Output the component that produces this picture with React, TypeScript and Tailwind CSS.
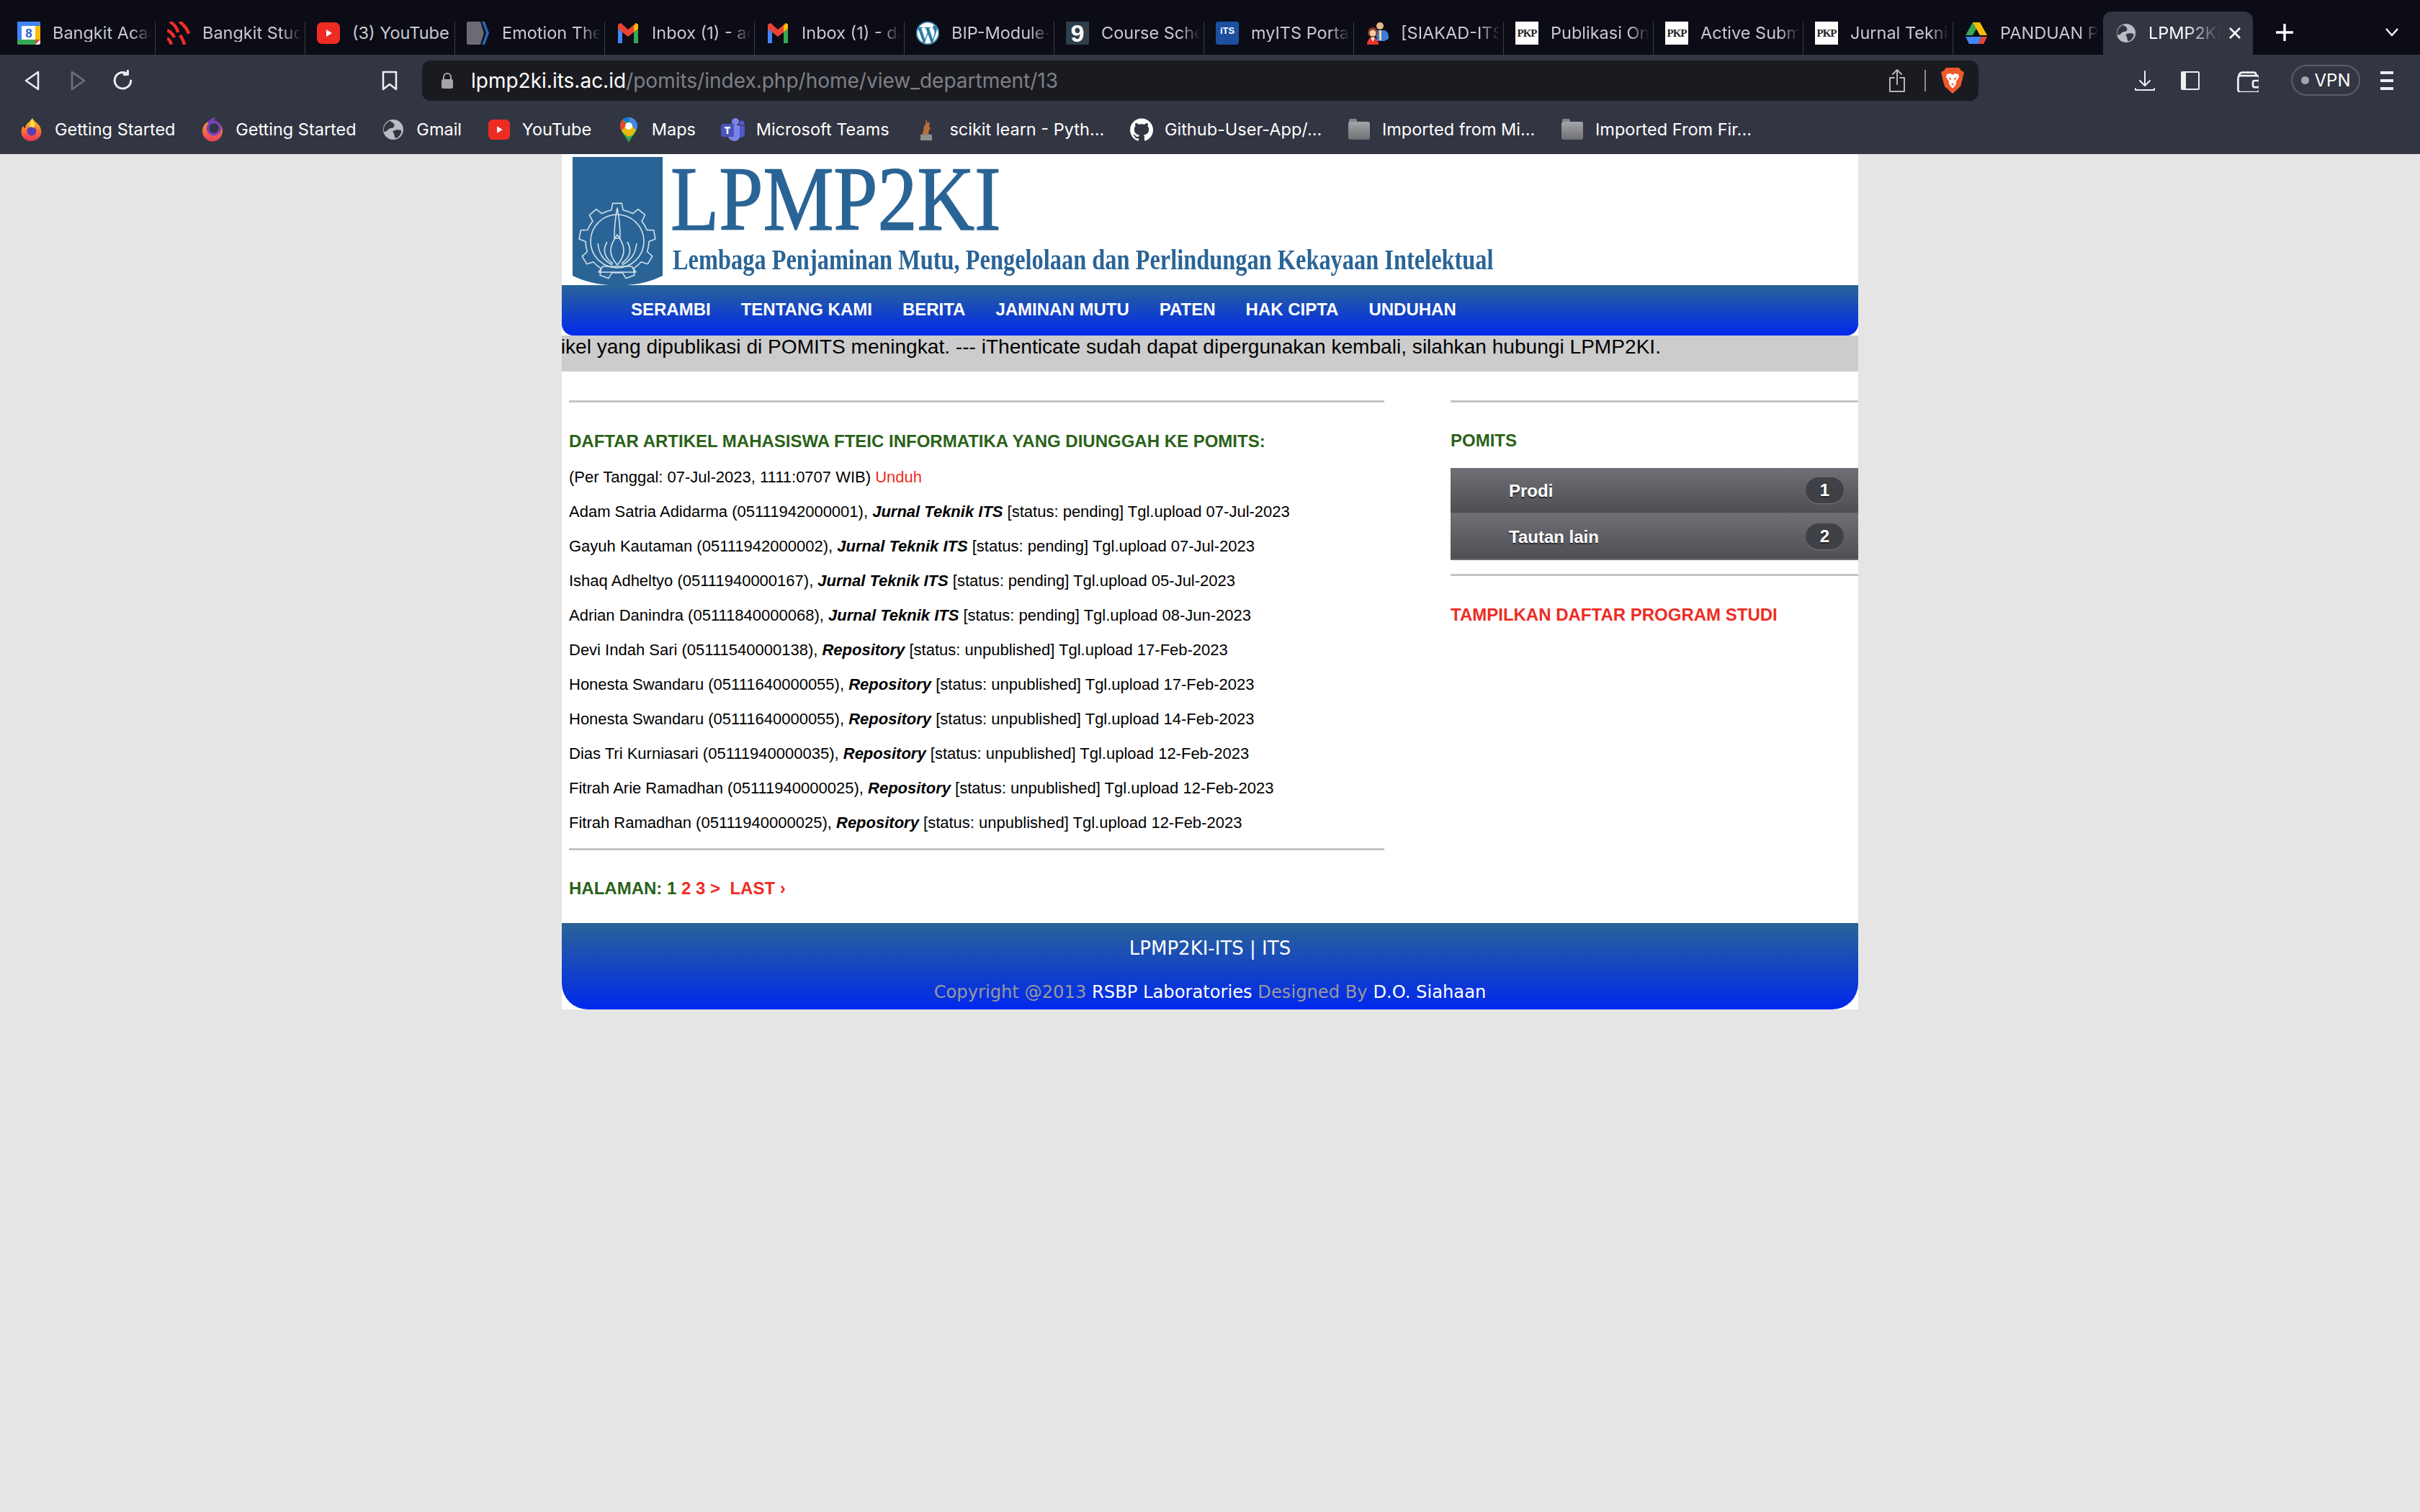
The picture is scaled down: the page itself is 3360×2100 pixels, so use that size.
import React from "react";
import { SiGithub, SiWordpress } from "react-icons/si";

const chromeFont = "font-['Inter','Liberation_Sans',sans-serif]";

function Yt({ s = 32 }: { s?: number }) {
  return (
    <svg width={s} height={s} viewBox="0 0 32 32" className="shrink-0">
      <rect x="0" y="1" width="32" height="30" rx="7" fill="#ee2c24" />
      <path d="M13 11l8 5-8 5z" fill="#fff" />
    </svg>
  );
}
function Globe({ s = 30, tone = "#b9bcc2", dark = "#323542" }: { s?: number; tone?: string; dark?: string }) {
  return (
    <svg width={s} height={s} viewBox="0 0 30 30" className="shrink-0">
      <circle cx="15" cy="15" r="14" fill={tone} />
      <path d="M10 3c5 2 8 5 6 8-2 3-6 1-8 4-2 2-3 3-6 3-1-7 2-12 8-15zM15 17c3-2 8-2 11-1 1 3-2 9-7 11-3-1-2-4-3-6-1-2-2-3-1-4z" fill={dark} />
    </svg>
  );
}
function Gmail() {
  return (
    <svg width="30" height="32" viewBox="0 0 30 32" className="shrink-0">
      <path d="M1 6v24h6V14z" fill="#4285f4" />
      <path d="M23 14v16h6V6z" fill="#34a853" />
      <path d="M1 4v6l14 11 14-11V4l-3-2-11 9L5 2z" fill="#ea4335" />
      <path d="M23 6l3-4 3 2v6l-6 4z" fill="#fbbc04" />
    </svg>
  );
}
function Pkp() {
  return (
    <div className="w-[32px] h-[32px] bg-white shrink-0 flex items-center justify-center overflow-hidden">
      <span className="font-['Liberation_Serif',serif] font-bold text-[15px] text-[#222] tracking-[-1px]">PKP</span>
    </div>
  );
}
function Cal() {
  return (
    <svg width="32" height="32" viewBox="0 0 32 32" className="shrink-0">
      <rect width="32" height="32" rx="3" fill="#fff" />
      <path d="M0 3a3 3 0 013-3h26a3 3 0 013 3v3H0z" fill="#4285f4" />
      <path d="M0 0h6v25H0z" fill="#4285f4" />
      <path d="M0 25h25v7H3a3 3 0 01-3-3z" fill="#34a853" />
      <path d="M25 6h7v19h-7z" fill="#fbbc04" />
      <path d="M25 25h7l-7 7z" fill="#ea4335" />
      <text x="16" y="22" textAnchor="middle" fontSize="17" fontWeight="700" fill="#2a5bd7" fontFamily="Liberation Sans">8</text>
    </svg>
  );
}
function Bangkit() {
  return (
    <svg width="32" height="32" viewBox="0 0 32 32" className="shrink-0" fill="none" stroke="#ee2c24" strokeWidth="4.5">
      <path d="M4 0c6 4 10 9 11 15" />
      <path d="M17 0c6 4 11 10 13 17" />
      <path d="M0 12c5 2 8 5 10 10" />
      <path d="M18 19c3 4 5 8 6 13" />
      <path d="M0 23c3 2 5 5 6 9" />
    </svg>
  );
}
function Emotion() {
  return (
    <svg width="32" height="32" viewBox="0 0 32 32" className="shrink-0">
      <path d="M2 0h17l5 16-5 16H2a2 2 0 01-2-2V2a2 2 0 012-2z" fill="#6a6c71" />
      <path d="M21 0h4l6 16-6 16h-4l6-16z" fill="#2a66b8" />
    </svg>
  );
}
function Wp() {
  return (
    <div className="w-[32px] h-[32px] rounded-full bg-white shrink-0 flex items-center justify-center">
      <SiWordpress size={32} color="#2a7ba8" />
    </div>
  );
}
function Nine() {
  return (
    <div className="w-[32px] h-[32px] bg-[#2e3e4b] shrink-0 flex items-center justify-center overflow-hidden">
      <span className="font-['Liberation_Sans',sans-serif] font-bold text-[34px] leading-none text-white">9</span>
    </div>
  );
}
function Its() {
  return (
    <div className="w-[32px] h-[32px] rounded-[3px] bg-[#1c4fa0] shrink-0 flex items-start justify-center overflow-hidden pt-[6px]">
      <span className="font-['Liberation_Sans',sans-serif] font-bold text-[13px] leading-none text-white">iTS</span>
    </div>
  );
}
function Siakad() {
  return (
    <svg width="32" height="32" viewBox="0 0 32 32" className="shrink-0">
      <circle cx="20" cy="6" r="5" fill="#e6b98c" />
      <path d="M14 12h12c5 1 6 6 6 12l-6 3H16z" fill="#3b7dd8" />
      <path d="M19 12h3v14h-3z" fill="#e9d9a0" />
      <circle cx="10" cy="15" r="7" fill="#8a3b1f" />
      <circle cx="10" cy="16" r="4.5" fill="#f2c8a4" />
      <path d="M2 32c0-6 3-10 8-10s8 4 8 10z" fill="#e9352b" />
      <path d="M7 22h6l-3 6z" fill="#fff" />
    </svg>
  );
}
function Drive() {
  return (
    <svg width="30" height="32" viewBox="0 0 30 32" className="shrink-0">
      <path d="M10 1h10l-10 18H0z" fill="#34a853" />
      <path d="M10 1h10l10 18H20z" fill="#fbbc04" />
      <path d="M0 21h22l-4 10H5z" fill="#4285f4" />
      <path d="M22 21h8l-5 10h-7z" fill="#ea4335" />
    </svg>
  );
}

const tabs: [React.ReactNode, string][] = [
  [<Cal />, "Bangkit Academy"],
  [<Bangkit />, "Bangkit Student"],
  [<Yt />, "(3) YouTube"],
  [<Emotion />, "Emotion Theory"],
  [<Gmail />, "Inbox (1) - adam"],
  [<Gmail />, "Inbox (1) - data"],
  [<Wp />, "BIP-Module-Bangkit"],
  [<Nine />, "Course Schedule"],
  [<Its />, "myITS Portal"],
  [<Siakad />, "[SIAKAD-ITS]"],
  [<Pkp />, "Publikasi Online"],
  [<Pkp />, "Active Submissions"],
  [<Pkp />, "Jurnal Teknik ITS"],
  [<Drive />, "PANDUAN POMITS"],
];

function Tab({ icon, title, sep }: { icon: React.ReactNode; title: string; sep: boolean }) {
  const fade = title === "(3) YouTube" ? "" : "[mask-image:linear-gradient(to_right,black_80%,transparent)]";
  return (
    <div className="relative w-[208px] h-[60px] shrink-0 flex items-center pl-[16px] pr-[6px]">
      <div className="w-[32px] flex justify-center shrink-0">{icon}</div>
      <span className={`ml-[17px] flex-1 overflow-hidden whitespace-nowrap text-[23.5px] leading-none text-[#c9cad0] ${fade}`}>
        {title}
      </span>
      {sep && <div className="absolute right-0 bottom-0 h-[46px] w-[1px] bg-[#3a3c46]" />}
    </div>
  );
}

const FirefoxA = () => (
  <svg width="30" height="34" viewBox="0 0 30 34" className="shrink-0">
    <defs>
      <linearGradient id="fa" x1="0" y1="0" x2="0" y2="1">
        <stop offset="0" stopColor="#ffd02e" />
        <stop offset="0.5" stopColor="#ff7a2e" />
        <stop offset="1" stopColor="#e5305f" />
      </linearGradient>
    </defs>
    <path d="M16 1c2 4 6 6 10 11 4 7 3 14-3 18-5 4-13 4-18 0C0 26-1 18 3 12c1 2 2 3 3 3 0-6 6-8 10-14z" fill="url(#fa)" />
    <circle cx="15" cy="19" r="6.5" fill="#5a3bb8" />
    <path d="M15 3c3 4 5 8 3 12-2-2-4-2-6-1 0-4 2-7 3-11z" fill="#ffe24d" />
  </svg>
);
const FirefoxB = () => (
  <svg width="30" height="34" viewBox="0 0 30 34" className="shrink-0">
    <defs>
      <linearGradient id="fb" x1="0" y1="0" x2="0" y2="1">
        <stop offset="0" stopColor="#ff9a2e" />
        <stop offset="1" stopColor="#e5405f" />
      </linearGradient>
    </defs>
    <ellipse cx="15" cy="19" rx="14" ry="14.5" fill="url(#fb)" />
    <circle cx="17" cy="15" r="8.5" fill="#323542" stroke="#7a3ec0" strokeWidth="3.5" />
    <path d="M20 0c-7 1-11 4-12 9l5-2c3-2 5-4 7-7z" fill="#7a3ec0" />
  </svg>
);
const MapsPin = () => (
  <svg width="26" height="36" viewBox="0 0 26 36" className="shrink-0">
    <path d="M13 36C9 27 1 21 1 13 1 6 6 1 13 1s12 5 12 12c0 8-8 14-12 23z" fill="#34a853" />
    <path d="M4 4c2-2 6-3 9-3v8z" fill="#1a73e8" />
    <path d="M1 13c0-3 1-6 3-9l6 7-7 9c-1-2-2-5-2-7z" fill="#ea4335" />
    <path d="M13 1c6 0 12 5 12 12 0 2-1 4-2 6L16 9z" fill="#4285f4" />
    <path d="M3 20l7-9 6 0 7 8-5 7-6 2-4-3z" fill="#fbbc04" opacity="0.9" />
    <circle cx="13" cy="13" r="5" fill="#fff" />
  </svg>
);
const Teams = () => (
  <svg width="34" height="34" viewBox="0 0 34 34" className="shrink-0">
    <circle cx="20" cy="6" r="5" fill="#7b83eb" />
    <circle cx="29" cy="8" r="3.5" fill="#5059c9" />
    <path d="M24 12h9v10c0 4-3 6-6 6h-3z" fill="#5059c9" />
    <path d="M10 11h16v15c0 4-3 7-7 7s-9-3-9-7z" fill="#7b83eb" />
    <rect x="0" y="9" width="18" height="18" rx="2" fill="#4b53bc" />
    <path d="M5 13h8v2.500h-2.700V23H7.700v-7.500H5z" fill="#fff" />
  </svg>
);
const Scikit = () => (
  <svg width="18" height="32" viewBox="0 0 18 32" className="shrink-0">
    <path d="M9 1l2 6 3-2-1 7 2 2-3 5 1 5H3l2-6 1-7 2-2z" fill="#b5703a" />
    <rect x="1" y="23" width="16" height="8" fill="#8f8f8f" />
  </svg>
);
const Folder = () => (
  <svg width="30" height="32" viewBox="0 0 30 32" className="shrink-0">
    <defs>
      <linearGradient id="fo" x1="0" y1="0" x2="0" y2="1">
        <stop offset="0" stopColor="#a3a4a8" />
        <stop offset="1" stopColor="#6f7074" />
      </linearGradient>
    </defs>
    <path d="M1 3a2 2 0 012-2h7a2 2 0 012 2v2H1z" fill="#85868a" />
    <rect x="0" y="5" width="30" height="25" rx="3" fill="url(#fo)" />
  </svg>
);

const bookmarks: [React.ReactNode, string][] = [
  [<FirefoxA />, "Getting Started"],
  [<FirefoxB />, "Getting Started"],
  [<Globe />, "Gmail"],
  [<Yt s={30} />, "YouTube"],
  [<MapsPin />, "Maps"],
  [<Teams />, "Microsoft Teams"],
  [<Scikit />, "scikit learn - Pyth..."],
  [<SiGithub size={32} color="#fff" />, "Github-User-App/..."],
  [<Folder />, "Imported from Mi..."],
  [<Folder />, "Imported From Fir..."],
];

const Stroke = ({ s = 28, c = "#eceef2", w = 2.4, children }: { s?: number; c?: string; w?: number; children: React.ReactNode }) => (
  <svg width={s} height={s} viewBox="0 0 28 28" fill="none" stroke={c} strokeWidth={w} strokeLinecap="round" strokeLinejoin="round" className="shrink-0">
    {children}
  </svg>
);

function Shield() {
  const teeth = 9;
  const cx = 62;
  const cy = 117;
  const pts: string[] = [];
  for (let i = 0; i < teeth; i++) {
    const a = (i / teeth) * Math.PI * 2 - Math.PI / 2;
    const step = (Math.PI * 2) / teeth;
    const p = (r: number, o: number) => `${(cx + r * Math.cos(a + o)).toFixed(1)} ${(cy + r * Math.sin(a + o)).toFixed(1)}`;
    pts.push(p(44, -step * 0.5), p(44, -step * 0.27), p(53, -step * 0.17), p(53, step * 0.17), p(44, step * 0.27));
  }
  const gear = "M" + pts.join("L") + "Z";
  return (
    <svg width="125" height="178" viewBox="0 0 125 178" className="shrink-0">
      <path d="M0 0h125v165c-36 18-88 18-125 0z" fill="#2a6496" />
      <g fill="none" stroke="#cfe0ea" strokeWidth="1.6" strokeLinejoin="round">
        <path d={gear} />
        <circle cx={cx} cy={cy} r="37" />
        <path d="M62 71c-3 14-4 28-4 42h8c0-14-1-28-4-42z" />
        <path d="M62 108c-10 14-14 26 0 42 14-16 10-28 0-42z" />
        <path d="M48 118c-6 10-6 20 8 30M76 118c6 10 6 20-8 30" />
        <path d="M35 120c2 14 6 22 20 30M89 120c-2 14-6 22-20 30" />
        <path d="M42 152h40l6 8H36z" />
      </g>
    </svg>
  );
}

const rows: [string, string, string][] = [
  ["Adam Satria Adidarma (05111942000001), ", "Jurnal Teknik ITS", " [status: pending] Tgl.upload 07-Jul-2023"],
  ["Gayuh Kautaman (05111942000002), ", "Jurnal Teknik ITS", " [status: pending] Tgl.upload 07-Jul-2023"],
  ["Ishaq Adheltyo (05111940000167), ", "Jurnal Teknik ITS", " [status: pending] Tgl.upload 05-Jul-2023"],
  ["Adrian Danindra (05111840000068), ", "Jurnal Teknik ITS", " [status: pending] Tgl.upload 08-Jun-2023"],
  ["Devi Indah Sari (05111540000138), ", "Repository", " [status: unpublished] Tgl.upload 17-Feb-2023"],
  ["Honesta Swandaru (05111640000055), ", "Repository", " [status: unpublished] Tgl.upload 17-Feb-2023"],
  ["Honesta Swandaru (05111640000055), ", "Repository", " [status: unpublished] Tgl.upload 14-Feb-2023"],
  ["Dias Tri Kurniasari (05111940000035), ", "Repository", " [status: unpublished] Tgl.upload 12-Feb-2023"],
  ["Fitrah Arie Ramadhan (05111940000025), ", "Repository", " [status: unpublished] Tgl.upload 12-Feb-2023"],
  ["Fitrah Ramadhan (05111940000025), ", "Repository", " [status: unpublished] Tgl.upload 12-Feb-2023"],
];

const navItems = ["SERAMBI", "TENTANG KAMI", "BERITA", "JAMINAN MUTU", "PATEN", "HAK CIPTA", "UNDUHAN"];
const blueGrad = "bg-[linear-gradient(to_bottom,#2a6496,#0028ee)]";

function SideItem({ label, n }: { label: string; n: string }) {
  return (
    <div className="h-[64px] flex items-center pl-[81px] pr-[20px] bg-[linear-gradient(to_bottom,#6f7075,#4e4f54)] border-b-[2px] border-b-[#6a6b70]">
      <span className="flex-1 text-white font-bold text-[24px] pt-[2px] [text-shadow:0_2px_1px_#2a2a2e]">{label}</span>
      <span className="w-[53px] h-[36px] rounded-full bg-[#404146] flex items-center justify-center text-white font-bold text-[24px] [box-shadow:0_1px_1px_#77787c] [text-shadow:0_2px_1px_#222]">
        {n}
      </span>
    </div>
  );
}

export default function App() {
  return (
    <div className="w-[3360px] h-[2100px] bg-[#e5e5e5] overflow-hidden flex flex-col">
      <div className={`h-[76px] bg-[#0b0c15] flex items-end pl-[8px] shrink-0 ${chromeFont}`}>
        {tabs.map(([icon, title], i) => (
          <Tab key={i} icon={icon} title={title} sep={i < tabs.length - 1} />
        ))}
        <div className="w-[208px] h-[60px] shrink-0 bg-[#323542] rounded-t-[12px] flex items-center pl-[18px] pr-[16px]">
          <Globe s={28} />
          <span className="ml-[17px] flex-1 overflow-hidden whitespace-nowrap text-[23.5px] leading-none text-white [mask-image:linear-gradient(to_right,black_45%,transparent_90%)]">
            LPMP2KI-ITS
          </span>
          <svg width="18" height="18" viewBox="0 0 18 18" stroke="#fff" strokeWidth="2.6" className="shrink-0">
            <path d="M2 2l14 14M16 2L2 16" />
          </svg>
        </div>
        <div className="h-[60px] flex items-center pl-[32px] pb-[2px]">
          <svg width="24" height="24" viewBox="0 0 24 24" stroke="#fff" strokeWidth="3.4" strokeLinecap="round">
            <path d="M12 1v22M1 12h22" />
          </svg>
          <svg width="18" height="12" viewBox="0 0 18 12" fill="none" stroke="#fff" strokeWidth="2.4" strokeLinejoin="round" className="ml-[128px]">
            <path d="M1 1l8 9 8-9" />
          </svg>
        </div>
      </div>

      <div className={`h-[64px] pt-[7px] bg-[#323542] flex items-center shrink-0 ${chromeFont}`}>
        <div className="pl-[34px] flex items-center">
          <svg width="21" height="28" viewBox="0 0 21 28" fill="none" stroke="#eceef2" strokeWidth="2.6" strokeLinejoin="round" className="shrink-0">
            <path d="M19 2v24L2 14z" />
          </svg>
          <svg width="21" height="28" viewBox="0 0 21 28" fill="none" stroke="#6f717a" strokeWidth="2.6" strokeLinejoin="round" className="shrink-0 ml-[43px]">
            <path d="M2 2v24l17-12z" />
          </svg>
          <div className="ml-[37px]">
            <Stroke s={30} w={2.8}><path d="M24 14a10.500 10.500 0 11-4-8.500" /><path d="M20 1v5h-5" /></Stroke>
          </div>
          <div className="ml-[343px]">
            <svg width="24" height="28" viewBox="0 0 24 28" fill="none" stroke="#eceef2" strokeWidth="2.6" strokeLinejoin="round">
              <path d="M3 2h18v24l-9-7-9 7z" />
            </svg>
          </div>
        </div>
        <div className="ml-[33px] w-[2161px] h-[56px] rounded-[12px] bg-[#1a1b20] flex items-center pl-[27px] pr-[20px] self-end">
          <svg width="16" height="22" viewBox="0 0 16 22" className="shrink-0">
            <path d="M3 9V6a5 5 0 0110 0v3" fill="none" stroke="#a3a5ab" strokeWidth="2" />
            <rect x="0" y="9" width="16" height="13" rx="2" fill="#a3a5ab" />
          </svg>
          <span className="ml-[25px] text-[28px] leading-none text-[#7f8087] whitespace-nowrap">
            <span className="text-white">lpmp2ki.its.ac.id</span>/pomits/index.php/home/view_department/13
          </span>
          <div className="flex-1" />
          <svg width="24" height="34" viewBox="0 0 24 34" fill="none" stroke="#b4b6bb" strokeWidth="2" strokeLinecap="round" strokeLinejoin="round" className="shrink-0">
            <path d="M12 22V2M6 8l6-6 6 6M8 13H2v19h20V13h-6" />
          </svg>
          <div className="ml-[26px] w-[2px] h-[30px] bg-[#8a8c92]" />
          <svg width="32" height="36" viewBox="0 0 32 36" className="ml-[21px] shrink-0">
            <path d="M7 0h18l3 4 4 2-2 9-3 11-11 10-11-10L2 15 0 6l4-2z" fill="#f0592a" />
            <path d="M8 9l5-1 3 2 3-2 5 1 1 4-4 6v4l-5 6-5-6v-4l-4-6z" fill="#fff" />
            <path d="M10 13l4 2-1 3zM22 13l-4 2 1 3zM14 22h4l-2 3z" fill="#f0592a" />
          </svg>
        </div>
        <div className="ml-[217px] flex items-center">
          <Stroke s={28} w={2}><path d="M14 1v19M7 14l7 7 7-7M1 25v2h26v-2" /></Stroke>
          <div className="ml-[36px] w-[26px] h-[26px] border-[2px] border-[#eceef2] rounded-[2px] border-l-[7px]" />
          <div className="ml-[50px]">
            <Stroke s={32} w={2.4}><path d="M4 8c0-2 2-4 4-4h14c2 0 3 1 3 4" /><rect x="3" y="8" width="26" height="20" rx="3" /><rect x="21" y="14" width="9" height="8" rx="2" /></Stroke>
          </div>
          <div className="ml-[45px] w-[96px] h-[43px] rounded-full border-[2px] border-[#5b5e6a] flex items-center justify-center gap-[8px] text-[24px] text-white">
            <span className="w-[11px] h-[11px] rounded-full bg-[#a3a6b2]" />
            VPN
          </div>
          <div className="ml-[28px] w-[18px] flex flex-col gap-[7px]">
            <span className="h-[4px] bg-[#eceef2]" />
            <span className="h-[4px] bg-[#eceef2]" />
            <span className="h-[4px] bg-[#eceef2]" />
          </div>
        </div>
      </div>

      <div className={`h-[74px] pt-[6px] bg-[#323542] flex items-center pl-[28px] gap-[35.7px] shrink-0 ${chromeFont}`}>
        {bookmarks.map(([icon, label], i) => (
          <div key={i} className="flex items-center gap-[16px]">
            <div className="w-[32px] flex justify-center">{icon}</div>
            <span className="text-[23.5px] leading-none text-white whitespace-nowrap">{label}</span>
          </div>
        ))}
      </div>

      <div className="w-[1800px] mx-auto bg-white font-['Liberation_Sans',sans-serif] text-black">
        <div className="h-[182px] flex pl-[15px] pt-[4px] overflow-hidden">
          <Shield />
          <div className="ml-[11px] font-['Liberation_Serif',serif] text-[#2a6496] whitespace-nowrap">
            <div className="text-[128px] leading-[100px] h-[104px] pt-[8px] origin-left scale-x-[0.86] [-webkit-text-stroke:1.5px_#2a6496]">LPMP2KI</div>
            <div className="mt-[14px] ml-[3px] text-[40px] leading-[50px] font-bold origin-left scale-x-[0.81]">
              Lembaga Penjaminan Mutu, Pengelolaan dan Perlindungan Kekayaan Intelektual
            </div>
          </div>
        </div>

        <div className={`h-[70px] ${blueGrad} rounded-b-[16px] flex items-center pl-[96px] gap-[42px] pb-[3px]`}>
          {navItems.map((n) => (
            <span key={n} className="text-white font-bold text-[24px] whitespace-nowrap">{n}</span>
          ))}
        </div>

        <div className="h-[50px] bg-[#cccccc] overflow-hidden flex justify-end pr-[274px] pb-[18px] items-center">
          <span className="whitespace-nowrap text-[28.1px] leading-none">
            Jumlah artikel yang dipublikasi di POMITS meningkat. --- iThenticate sudah dapat dipergunakan kembali, silahkan hubungi LPMP2KI.
          </span>
        </div>

        <div className="flex pt-[40px] pb-[28px]">
          <div className="ml-[10px] w-[1132px]">
            <div className="border-t-[3px] border-t-[#c4c4c4]" />
            <h2 className="mt-[34px] h-[40px] leading-[40px] font-bold text-[24px] text-[#2a6218]">
              DAFTAR ARTIKEL MAHASISWA FTEIC INFORMATIKA YANG DIUNGGAH KE POMITS:
            </h2>
            <p className="mt-[6px] h-[48px] leading-[48px] text-[22px]">
              (Per Tanggal: 07-Jul-2023, 1111:0707 WIB) <span className="text-[#ee2c24]">Unduh</span>
            </p>
            {rows.map((r, i) => (
              <p key={i} className="h-[48px] leading-[48px] text-[22px] whitespace-nowrap">
                {r[0]}
                <b className="italic">{r[1]}</b>
                {r[2]}
              </p>
            ))}
            <div className="mt-[11px] border-t-[3px] border-t-[#c4c4c4]" />
            <div className="mt-[33px] h-[40px] leading-[40px] font-bold text-[24px] text-[#2a6218]">
              HALAMAN: 1 <span className="text-[#ee2c24]">2 3 &gt; &nbsp;LAST ›</span>
            </div>
          </div>

          <div className="ml-[92px] w-[566px]">
            <div className="border-t-[3px] border-t-[#c4c4c4]" />
            <h3 className="mt-[33px] h-[40px] leading-[40px] font-bold text-[24px] text-[#2a6218]">POMITS</h3>
            <div className="mt-[18px]">
              <SideItem label="Prodi" n="1" />
              <SideItem label="Tautan lain" n="2" />
            </div>
            <div className="mt-[19px] border-t-[3px] border-t-[#c4c4c4]" />
            <div className="mt-[34px] h-[40px] leading-[40px] font-bold text-[24px] text-[#ee2c24]">
              TAMPILKAN DAFTAR PROGRAM STUDI
            </div>
          </div>
        </div>

        <div className={`h-[120px] ${blueGrad} rounded-b-[36px] flex flex-col items-center font-['DejaVu_Sans',sans-serif] text-[24.2px] text-white`}>
          <div className="mt-[15px] leading-[40px] text-[26px]">LPMP2KI-ITS | ITS</div>
          <div className="mt-[21px] leading-[40px] text-[#9a9a9a]">
            Copyright @2013 <span className="text-white">RSBP Laboratories</span> Designed By <span className="text-white">D.O. Siahaan</span>
          </div>
        </div>
      </div>
    </div>
  );
}
